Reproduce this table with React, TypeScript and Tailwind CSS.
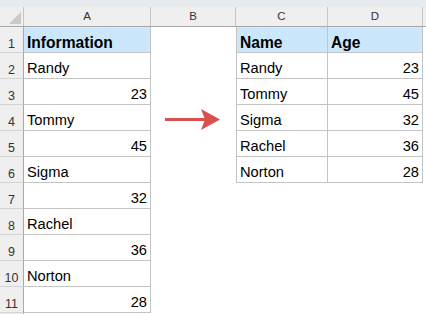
const rowsA: { text: string; num?: boolean; head?: boolean }[] = [
  { text: "Information", head: true },
  { text: "Randy" },
  { text: "23", num: true },
  { text: "Tommy" },
  { text: "45", num: true },
  { text: "Sigma" },
  { text: "32", num: true },
  { text: "Rachel" },
  { text: "36", num: true },
  { text: "Norton" },
  { text: "28", num: true },
];

const rowsCD: [string, string][] = [
  ["Name", "Age"],
  ["Randy", "23"],
  ["Tommy", "45"],
  ["Sigma", "32"],
  ["Rachel", "36"],
  ["Norton", "28"],
];

const Arrow = () => (
  <svg width="56" height="21" viewBox="0 0 56 21">
    <rect x="0" y="9" width="40" height="3" fill="#d85050" />
    <polygon points="36,0 55,10.5 36,21 40,10.5" fill="#d85050" />
  </svg>
);

const App = () => {
  return (
    <div className="w-[426px] h-[314px] overflow-hidden bg-white font-['Liberation_Sans',Arial,sans-serif] text-black">
      <div className="h-[7px] bg-[#e8ebee]" />

      {/* column headers */}
      <div className="flex h-[20px] bg-[#efefef] border-b border-[#a9a9a9] text-[11.5px] text-[#333]">
        <div className="w-[24px] shrink-0 border-r border-[#c6c6c6] flex items-end justify-end p-[2px]">
          <svg width="12" height="12" viewBox="0 0 12 12">
            <polygon points="12,0 12,12 0,12" fill="#c9c9c9" />
          </svg>
        </div>
        <div className="w-[127px] shrink-0 border-r border-[#c6c6c6] flex items-center justify-center">A</div>
        <div className="w-[85px] shrink-0 border-r border-[#c6c6c6] flex items-center justify-center">B</div>
        <div className="w-[92px] shrink-0 border-r border-[#c6c6c6] flex items-center justify-center">C</div>
        <div className="w-[95px] shrink-0 border-r border-[#c6c6c6] flex items-center justify-center">D</div>
        <div className="flex-1" />
      </div>

      {rowsA.map((a, i) => {
        const cd = rowsCD[i];
        const blue = i === 0;
        return (
          <div key={i} className="flex h-[26px]">
            <div className="w-[24px] shrink-0 bg-[#efefef] border-r border-b border-r-[#a9a9a9] border-b-[#d4d4d4] flex items-end justify-center text-[12.5px] leading-[15px] text-[#333]">
              {i + 1}
            </div>
            <div
              className={`w-[127px] shrink-0 border-r border-b border-[#c4c4c4] flex items-end px-[3px] ${
                a.head ? "bg-[#cbe7fb] font-bold text-[15.6px] leading-[18px]" : "text-[14.67px] leading-[17px] pb-[1px]"
              } ${a.num ? "justify-end" : ""}`}
            >
              {a.text}
            </div>
            <div className={`w-[85px] shrink-0 flex items-center pl-[14px] pt-[3px] ${cd ? "" : ""}`}>
              {i === 3 && <Arrow />}
            </div>
            {cd ? (
              <>
                <div
                  className={`w-[92px] shrink-0 border-l border-r border-b border-[#c4c4c4] flex items-end px-[3px] ${
                    blue ? "bg-[#cbe7fb] font-bold text-[15.6px] leading-[18px]" : "text-[14.67px] leading-[17px] pb-[1px]"
                  }`}
                >
                  {cd[0]}
                </div>
                <div
                  className={`w-[95px] shrink-0 border-r border-b border-[#c4c4c4] flex items-end px-[3px] ${
                    blue ? "bg-[#cbe7fb] font-bold text-[15.6px] leading-[18px]" : "text-[14.67px] leading-[17px] pb-[1px] justify-end"
                  }`}
                >
                  {cd[1]}
                </div>
              </>
            ) : (
              <div className="w-[188px] shrink-0" />
            )}
            <div className="flex-1" />
          </div>
        );
      })}

      <div className="flex h-[10px]">
        <div className="w-[24px] shrink-0 bg-[#efefef] border-r border-[#a9a9a9]" />
        <div className="flex-1" />
      </div>
    </div>
  );
};

export default App;
